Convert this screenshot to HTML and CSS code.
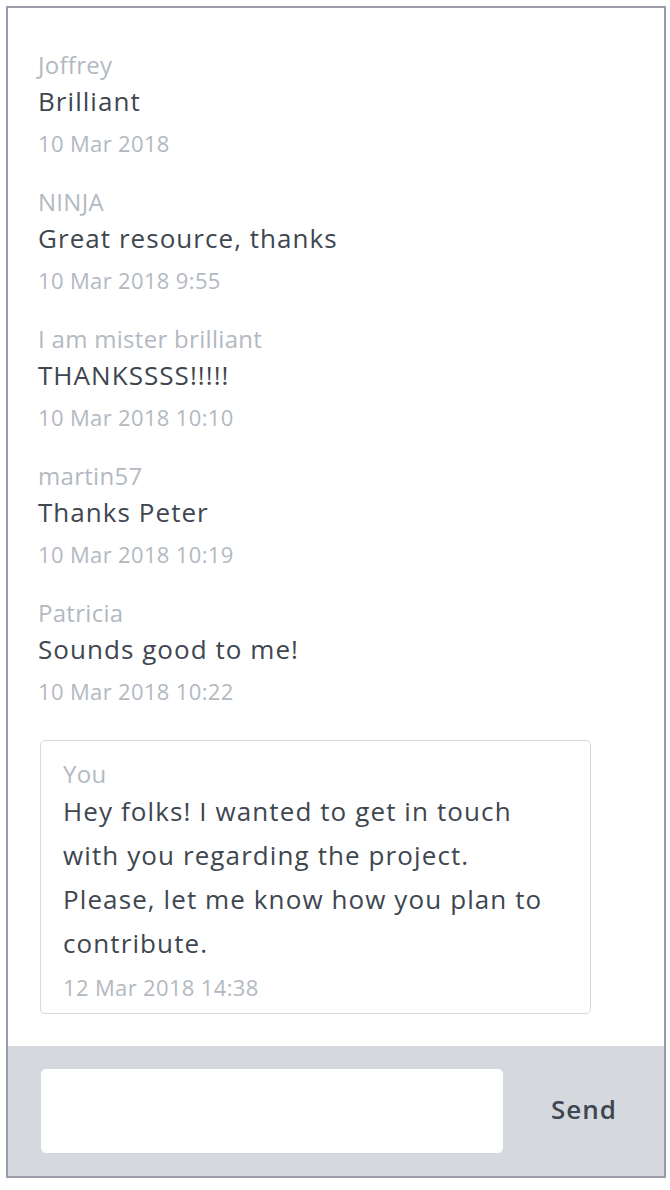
FILE: index.html
```html
<!DOCTYPE html>
<html lang="en">
<head>
<meta charset="utf-8">
<title>Chat</title>
<link rel="stylesheet" href="styles.css">
</head>
<body>
<div class="frame">
  <div class="messages">
    <div class="msg">
      <div class="name">Joffrey</div>
      <div class="text">Brilliant</div>
      <div class="date">10 Mar 2018</div>
    </div>
    <div class="msg">
      <div class="name">NINJA</div>
      <div class="text">Great resource, thanks</div>
      <div class="date">10 Mar 2018 9:55</div>
    </div>
    <div class="msg">
      <div class="name">I am mister brilliant</div>
      <div class="text">THANKSSSS!!!!!</div>
      <div class="date">10 Mar 2018 10:10</div>
    </div>
    <div class="msg">
      <div class="name">martin57</div>
      <div class="text">Thanks Peter</div>
      <div class="date">10 Mar 2018 10:19</div>
    </div>
    <div class="msg">
      <div class="name">Patricia</div>
      <div class="text">Sounds good to me!</div>
      <div class="date">10 Mar 2018 10:22</div>
    </div>
    <div class="bubble">
      <div class="name">You</div>
      <div class="bubble-text">Hey folks! I wanted to get in touch with you regarding the project. Please, let me know how you plan to contribute.</div>
      <div class="bubble-date">12 Mar 2018 14:38</div>
    </div>
  </div>
  <div class="footer">
    <div class="input"></div>
    <div class="send">Send</div>
  </div>
</div>
</body>
</html>
```
FILE: styles.css
```css
html, body {
  margin: 0;
  padding: 0;
  background: #ffffff;
}
body {
  padding: 6px;
  font-family: "Open Sans", "Noto Sans", sans-serif;
}
.frame {
  width: 656px;
  height: 1168px;
  border: 2px solid #9b9bac;
  display: flex;
  flex-direction: column;
  background: #ffffff;
}
.messages {
  flex: 1;
  padding: 42px 0 0 30px;
}
.msg {
  margin-bottom: 23px;
}
.name {
  font-size: 24px;
  line-height: 30px;
  letter-spacing: 0.3px;
  color: #b3b9c1;
}
.text {
  font-size: 26px;
  line-height: 42px;
  letter-spacing: 1.05px;
  color: #3e4650;
}
.date {
  font-size: 22px;
  line-height: 42px;
  letter-spacing: 0.35px;
  color: #b3b9c1;
}
.bubble {
  margin-top: 28px;
  margin-left: 2px;
  width: 527px;
  border: 1px solid #d6dadf;
  border-radius: 5px;
  padding: 18px 0 4px 22px;
}
.bubble-text {
  font-size: 26px;
  line-height: 44px;
  letter-spacing: 1.1px;
  color: #3e4650;
  width: 495px;
}
.bubble-date {
  font-size: 22px;
  line-height: 44px;
  letter-spacing: 0.35px;
  color: #b3b9c1;
}
.footer {
  height: 130px;
  background: #d5d9de;
  display: flex;
  align-items: center;
  padding-left: 33px;
  box-sizing: border-box;
}
.input {
  width: 462px;
  height: 84px;
  background: #ffffff;
  border-radius: 5px;
}
.send {
  margin-left: 48px;
  font-size: 26px;
  font-weight: 600;
  letter-spacing: 1px;
  color: #3e4650;
  position: relative;
  top: -2px;
}
```
